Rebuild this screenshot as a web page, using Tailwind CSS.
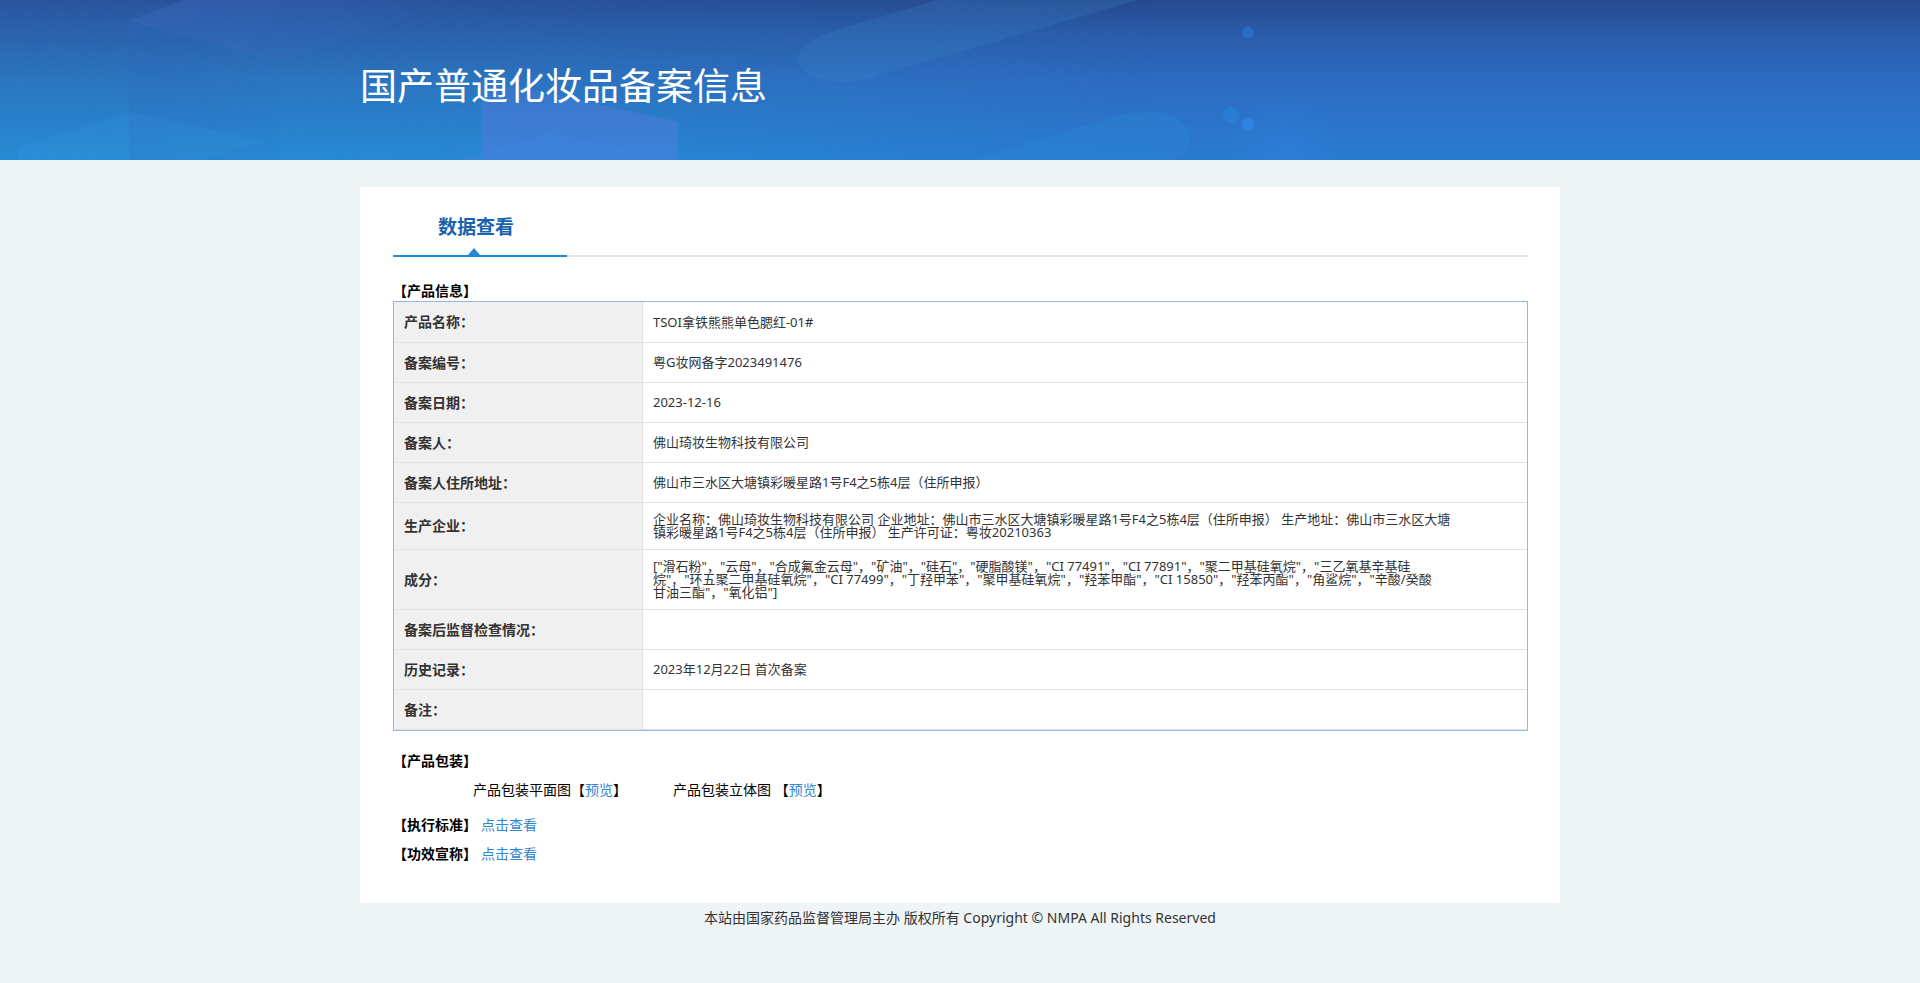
<!DOCTYPE html>
<html lang="zh-CN">
<head>
    <meta charset="UTF-8">
    <meta name="viewport" content="width=device-width, initial-scale=1.0">
    <title>国产普通化妆品备案信息</title>
    <script src="https://cdn.jsdelivr.net/npm/@tailwindcss/browser@4"></script>
</head>
<body class="bg-[#eff4f7] min-h-screen text-sm text-black font-['Noto_Sans','Noto_Sans_CJK_SC',sans-serif]">
    <!-- Banner -->
    <header class="relative h-40 overflow-hidden bg-[#2a6cc0]">
        <svg class="absolute inset-0 w-full h-full" viewBox="0 0 1920 160" preserveAspectRatio="none" aria-hidden="true">
            <defs>
                <linearGradient id="base" x1="0" y1="0" x2="0" y2="1">
                    <stop offset="0" stop-color="#264a90"/>
                    <stop offset="0.2" stop-color="#2a5ba9"/>
                    <stop offset="0.5" stop-color="#2d6bc2"/>
                    <stop offset="1" stop-color="#297bd1"/>
                </linearGradient>
                <linearGradient id="left" x1="0" y1="0" x2="0" y2="1">
                    <stop offset="0" stop-color="#2a559f"/>
                    <stop offset="0.5" stop-color="#2b76be"/>
                    <stop offset="1" stop-color="#278cd5"/>
                </linearGradient>
                <linearGradient id="fade" x1="0" y1="0" x2="1" y2="0">
                    <stop offset="0" stop-color="#fff"/>
                    <stop offset="0.25" stop-color="#fff" stop-opacity="0.8"/>
                    <stop offset="0.6" stop-color="#fff" stop-opacity="0"/>
                </linearGradient>
                <linearGradient id="cube" x1="0" y1="0" x2="1" y2="0">
                    <stop offset="0" stop-color="#3a68bc" stop-opacity="0.45"/>
                    <stop offset="1" stop-color="#3a6fc8" stop-opacity="0"/>
                </linearGradient>
                <linearGradient id="side" x1="0" y1="0" x2="1" y2="0">
                    <stop offset="0" stop-color="#2c66bc" stop-opacity="0.25"/>
                    <stop offset="1" stop-color="#2c66bc" stop-opacity="0.05"/>
                </linearGradient>
                <linearGradient id="purple" x1="0" y1="0" x2="0" y2="1">
                    <stop offset="0" stop-color="#3f78cc" stop-opacity="0.2"/>
                    <stop offset="0.4" stop-color="#3d7ad0"/>
                    <stop offset="1" stop-color="#3c82da"/>
                </linearGradient>
                <radialGradient id="glow">
                    <stop offset="0" stop-color="#2f83e0" stop-opacity="0.4"/>
                    <stop offset="1" stop-color="#2f83e0" stop-opacity="0"/>
                </radialGradient>
                <mask id="m"><rect width="1920" height="160" fill="url(#fade)"/></mask>
            </defs>
            <rect width="1920" height="160" fill="url(#base)"/>
            <rect width="1920" height="160" fill="url(#left)" mask="url(#m)"/>
            <path d="M129 21 184 0H460L279 62Z" fill="url(#cube)"/>
            <path d="M129 21 279 62V160H129Z" fill="url(#side)"/>
            <path d="M18 147 132 112 266 142 202 160H18Z" fill="#3a9be0" fill-opacity="0.18"/>
            <path d="M481 78 678 122V160H481Z" fill="url(#purple)"/>
            <path d="M459 160 551 133 676 160Z" fill="#3e84e2" fill-opacity="0.3"/>
            <path d="M937 0 839 29C812 38 798 47 798 59C798 72 820 82 842 82C858 82 868 80 880 74L960 52 1138 0Z" fill="#3a8ccc" fill-opacity="0.2"/>
            <path d="M975 160 1113 117C1125 113 1136 112 1150 112C1175 112 1190 124 1190 137C1190 147 1182 155 1171 160Z" fill="#2b8cd6" fill-opacity="0.28"/>
            <ellipse cx="1285" cy="152" rx="60" ry="60" fill="url(#glow)"/>
            <circle cx="1248" cy="33" r="6" fill="#2a6cbf"/>
            <circle cx="1231" cy="115" r="8" fill="#2a7dd4"/>
            <circle cx="1248" cy="124" r="6" fill="#2c84de"/>
        </svg>
        <div class="relative max-w-[1200px] h-full mx-auto flex items-center">
            <h1 class="text-[37px] leading-[48px] pt-3 text-white">国产普通化妆品备案信息</h1>
        </div>
    </header>

    <!-- Content card -->
    <main class="max-w-[1200px] mx-auto mt-[27px] bg-white pl-[33px] pr-8 pt-4 pb-[39px]">
        <div class="border-b-2 border-[#e5e5e5] flex">
            <h2 class="relative w-[174px] h-[54px] -mb-[2px] border-b-2 border-[#2488d8] pl-[45px] pt-[10px] text-[19px] leading-7 font-bold text-[#1862ab]">
                数据查看
                <svg class="absolute left-[75px] bottom-0 w-3 h-[7px]" viewBox="0 0 12 7" aria-hidden="true"><path d="M6 0 12 7H0Z" fill="#2488d8"/></svg>
            </h2>
        </div>

        <!-- Product info -->
        <h3 class="mt-6 leading-5 font-bold">【产品信息】</h3>
        <table class="w-full border-separate border-spacing-0 border border-[#94b7e4] text-[13px] leading-[13px] text-[#333]">
            <tbody class="[&_th]:bg-[#f0f0f0] [&_th]:border-r [&_th]:border-b [&_th]:border-[#e2e2e2] [&_th]:px-[10px] [&_th]:text-left [&_th]:text-sm [&_td]:border-b [&_td]:border-[#e2e2e2] [&_td]:px-[10px]">
                <tr class="h-[41px]">
                    <th class="w-[249px]">产品名称：</th>
                    <td>TSOI拿铁熊熊单色腮红-01#</td>
                </tr>
                <tr class="h-10">
                    <th>备案编号：</th>
                    <td>粤G妆网备字2023491476</td>
                </tr>
                <tr class="h-10">
                    <th>备案日期：</th>
                    <td>2023-12-16</td>
                </tr>
                <tr class="h-10">
                    <th>备案人：</th>
                    <td>佛山琦妆生物科技有限公司</td>
                </tr>
                <tr class="h-10">
                    <th>备案人住所地址：</th>
                    <td>佛山市三水区大塘镇彩暖星路1号F4之5栋4层（住所申报）</td>
                </tr>
                <tr class="h-[47px]">
                    <th>生产企业：</th>
                    <td>企业名称：佛山琦妆生物科技有限公司 企业地址：佛山市三水区大塘镇彩暖星路1号F4之5栋4层（住所申报） 生产地址：佛山市三水区大塘<br>镇彩暖星路1号F4之5栋4层（住所申报） 生产许可证：粤妆20210363</td>
                </tr>
                <tr class="h-[60px]">
                    <th>成分：</th>
                    <td>["滑石粉"，"云母"，"合成氟金云母"，"矿油"，"硅石"，"硬脂酸镁"，"CI 77491"，"CI 77891"，"聚二甲基硅氧烷"，"三乙氧基辛基硅<br>烷"，"环五聚二甲基硅氧烷"，"CI 77499"，"丁羟甲苯"，"聚甲基硅氧烷"，"羟苯甲酯"，"CI 15850"，"羟苯丙酯"，"角鲨烷"，"辛酸/癸酸<br>甘油三酯"，"氧化铝"]</td>
                </tr>
                <tr class="h-10">
                    <th>备案后监督检查情况：</th>
                    <td></td>
                </tr>
                <tr class="h-10">
                    <th>历史记录：</th>
                    <td>2023年12月22日 首次备案</td>
                </tr>
                <tr class="h-10">
                    <th>备注：</th>
                    <td></td>
                </tr>
            </tbody>
        </table>

        <!-- Packaging -->
        <h3 class="mt-5 leading-5 font-bold">【产品包装】</h3>
        <div class="mt-[9px] pl-20 flex gap-[46px] leading-5">
            <p>产品包装平面图【<a href="#" class="text-[#3385d0]">预览</a>】</p>
            <p>产品包装立体图 【<a href="#" class="text-[#3385d0]">预览</a>】</p>
        </div>
        <div class="mt-[15px] flex gap-1 leading-5">
            <h3 class="font-bold">【执行标准】</h3>
            <a href="#" class="text-[#3385d0]">点击查看</a>
        </div>
        <div class="mt-[9px] flex gap-1 leading-5">
            <h3 class="font-bold">【功效宣称】</h3>
            <a href="#" class="text-[#3385d0]">点击查看</a>
        </div>
    </main>

    <!-- Footer -->
    <footer class="pt-[5px] text-center leading-5 text-[#333]">
        本站由国家药品监督管理局主办 版权所有 Copyright © NMPA All Rights Reserved
    </footer>
</body>
</html>
